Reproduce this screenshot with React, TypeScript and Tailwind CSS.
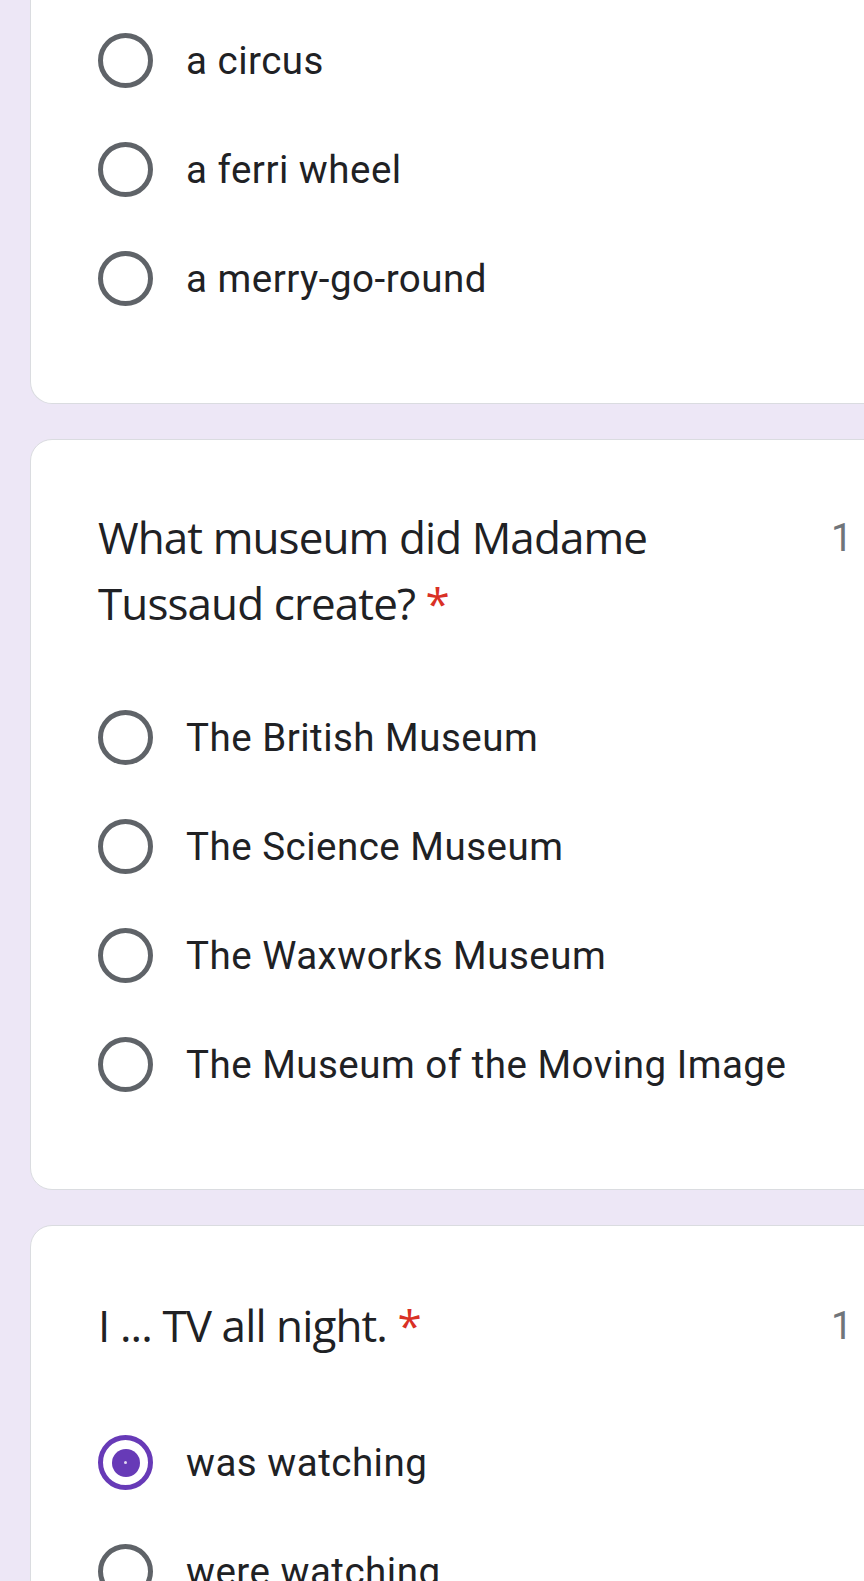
import React from 'react';

type Opt = { label: string; checked?: boolean };

function Radio({ checked }: { checked?: boolean }) {
  if (checked) {
    return (
      <div className="w-[55px] h-[55px] rounded-full border-[5.5px] border-[#673ab7] flex items-center justify-center shrink-0">
        <div className="w-[28px] h-[28px] rounded-full bg-[#673ab7] flex items-center justify-center">
          <div className="w-[3px] h-[3px] rounded-full bg-white/80" />
        </div>
      </div>
    );
  }
  return <div className="w-[55px] h-[55px] rounded-full border-[5.5px] border-[#5f6368] shrink-0" />;
}

function Options({ items }: { items: Opt[] }) {
  return (
    <div className="flex flex-col">
      {items.map((o) => (
        <div key={o.label} className="h-[109px] flex items-center gap-[33px]">
          <Radio checked={o.checked} />
          <span className="text-[38.5px] leading-[55px] tracking-[0.5px] text-[#202124] font-['Roboto',sans-serif] whitespace-nowrap">
            {o.label}
          </span>
        </div>
      ))}
    </div>
  );
}

function Title({ children }: { children: React.ReactNode }) {
  return (
    <div className="flex items-start">
      <div className="w-[733px] shrink-0 text-[44px] leading-[66px] text-[#202124] font-['Open_Sans',sans-serif] tracking-[-0.9px]">
        {children} <span className="text-[#d93025]">*</span>
      </div>
      <div className="pt-[6px] text-[38.5px] leading-[55px] tracking-[0.5px] text-[#70757a] font-['Roboto',sans-serif] whitespace-nowrap">
        1 балл
      </div>
    </div>
  );
}

export default function App() {
  return (
    <div className="h-[1581px] w-full overflow-hidden bg-[#ede7f6]">
      {/* tail of previous question */}
      <div className="ml-[30px] w-[1000px] bg-white border border-t-0 border-[#dadce0] rounded-b-[22px] pl-[67px] pt-[6px] pb-[70px]">
        <Options items={[{ label: 'a circus' }, { label: 'a ferri wheel' }, { label: 'a merry-go-round' }]} />
      </div>

      <div className="ml-[30px] mt-[35px] w-[1000px] bg-white border border-[#dadce0] rounded-[22px] pl-[67px] pt-[64px] pb-[70px]">
        <Title>
          What museum did Madame
          <br />
          Tussaud create?
        </Title>
        <div className="mt-[47px]">
          <Options
            items={[
              { label: 'The British Museum' },
              { label: 'The Science Museum' },
              { label: 'The Waxworks Museum' },
              { label: 'The Museum of the Moving Image' },
            ]}
          />
        </div>
      </div>

      <div className="ml-[30px] mt-[35px] w-[1000px] bg-white border border-[#dadce0] rounded-[22px] pl-[67px] pt-[66px] pb-[71px]">
        <Title>I ... TV all night.</Title>
        <div className="mt-[50px]">
          <Options items={[{ label: 'was watching', checked: true }, { label: 'were watching' }, { label: 'watched' }]} />
        </div>
      </div>
    </div>
  );
}
